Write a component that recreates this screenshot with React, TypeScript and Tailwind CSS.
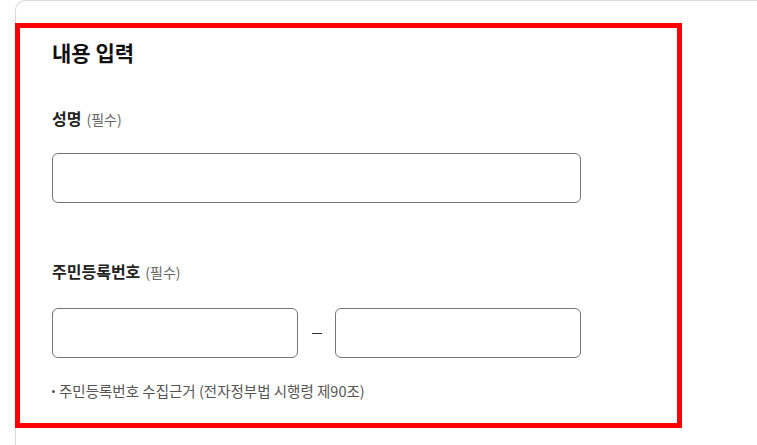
import React from 'react';

const font = { fontFamily: '"Noto Sans CJK KR", "Noto Sans", sans-serif' };

function Label({ text }: { text: string }) {
  return (
    <div className="flex items-baseline gap-[5px]">
      <span className="text-[16px] leading-[22px] font-bold text-[#222]">{text}</span>
      <span className="text-[14px] leading-[22px] text-[#666]">(필수)</span>
    </div>
  );
}

function Field({ className = '' }: { className?: string }) {
  return (
    <input
      type="text"
      className={`h-[50px] rounded-[6px] border border-[#767676] bg-white px-3 text-[15px] outline-none ${className}`}
    />
  );
}

export default function App() {
  return (
    <div className="min-h-[445px] w-[757px] overflow-hidden bg-white" style={font}>
      <div className="ml-[15px] w-[800px] rounded-tl-[10px] border-l border-t border-[#d9d9d9] pt-[22px] min-h-[445px]">
        <section className="-ml-px w-[667px] border-[5px] border-[#ff0000] pl-[32px] pt-[10px] pb-[22px]">
          <h2 className="text-[21px] leading-[28px] font-bold text-[#111]">내용 입력</h2>

          <div className="mt-[41px]">
            <Label text="성명" />
            <Field className="mt-[23px] w-[529px]" />
          </div>

          <div className="mt-[57px]">
            <Label text="주민등록번호" />
            <div className="mt-[25px] flex items-center">
              <Field className="w-[246px]" />
              <div className="flex w-[37px] justify-center">
                <span className="block h-px w-[10px] bg-[#333]" />
              </div>
              <Field className="w-[246px]" />
            </div>
          </div>

          <p className="mt-[23px] flex items-center gap-[4px] text-[14.5px] leading-[20px] text-[#555]">
            <span className="block h-[3px] w-[3px] rounded-full bg-[#555]" />
            주민등록번호 수집근거 (전자정부법 시행령 제90조)
          </p>
        </section>
      </div>
    </div>
  );
}
